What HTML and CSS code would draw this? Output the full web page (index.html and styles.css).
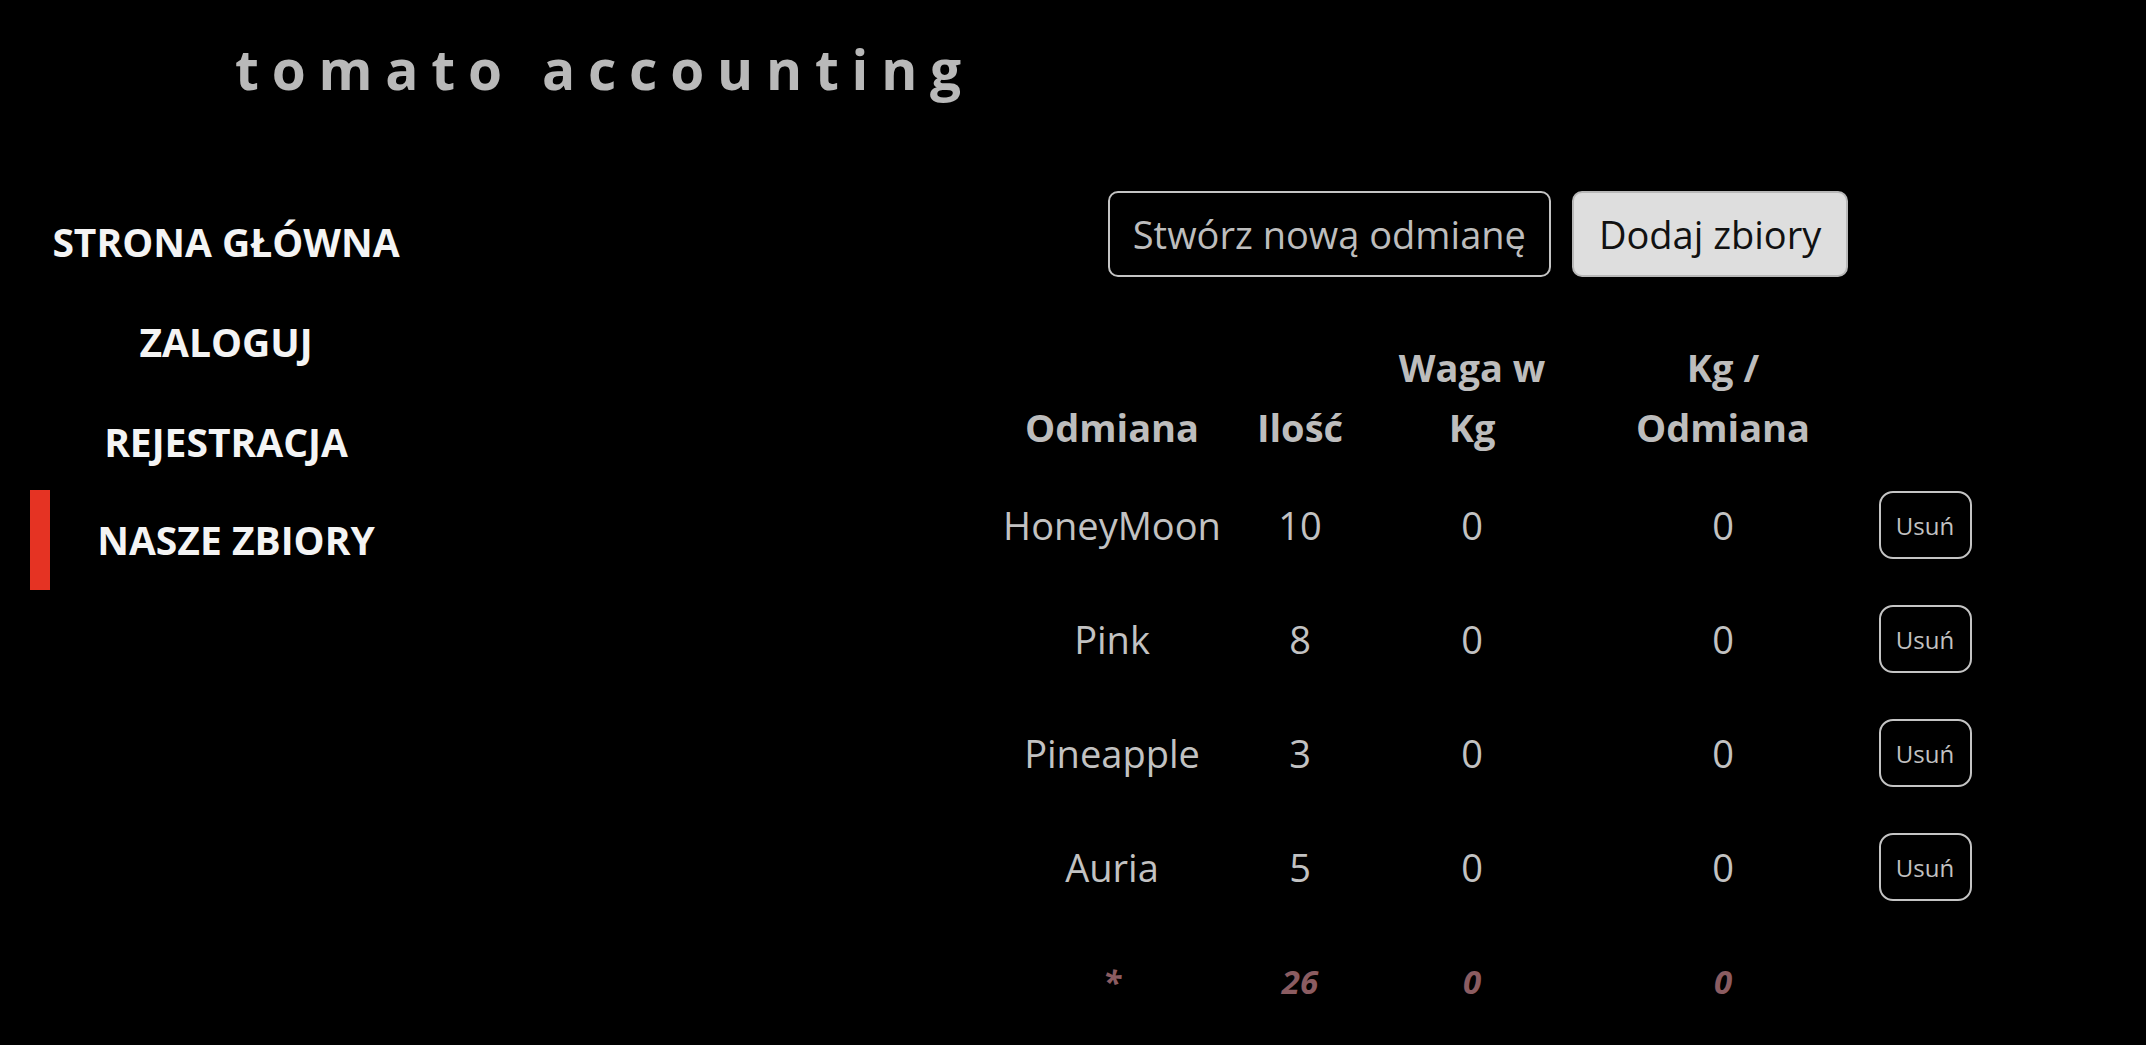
FILE: index.html
```html
<!DOCTYPE html>
<html lang="pl">
<head>
<meta charset="utf-8">
<title>tomato accounting</title>
<link rel="stylesheet" href="styles.css">
</head>
<body>
<header class="top">
  <h1 class="brand">tomato accounting</h1>
</header>
<div class="layout">
  <aside class="side">
    <nav class="nav">
      <a class="nav-item" href="#">Strona główna</a>
      <a class="nav-item" href="#">Zaloguj</a>
      <a class="nav-item" href="#">Rejestracja</a>
      <a class="nav-item active" href="#">Nasze zbiory</a>
    </nav>
  </aside>
  <main class="main">
    <div class="actions">
      <button class="btn btn-outline">Stwórz nową odmianę</button>
      <button class="btn btn-light">Dodaj zbiory</button>
    </div>
    <table class="harvest">
      <colgroup>
        <col class="c1"><col class="c2"><col class="c3"><col class="c4"><col class="c5">
      </colgroup>
      <thead>
        <tr>
          <th>Odmiana</th>
          <th>Ilość</th>
          <th>Waga w<br>Kg</th>
          <th>Kg /<br>Odmiana</th>
          <th></th>
        </tr>
      </thead>
      <tbody>
        <tr><td>HoneyMoon</td><td>10</td><td>0</td><td>0</td><td><button class="btn-del">Usuń</button></td></tr>
        <tr><td>Pink</td><td>8</td><td>0</td><td>0</td><td><button class="btn-del">Usuń</button></td></tr>
        <tr><td>Pineapple</td><td>3</td><td>0</td><td>0</td><td><button class="btn-del">Usuń</button></td></tr>
        <tr><td>Auria</td><td>5</td><td>0</td><td>0</td><td><button class="btn-del">Usuń</button></td></tr>
      </tbody>
      <tfoot>
        <tr><td>*</td><td>26</td><td>0</td><td>0</td><td></td></tr>
      </tfoot>
    </table>
  </main>
</div>
</body>
</html>
```

FILE: styles.css
```css
html, body {
  margin: 0;
  padding: 0;
  background: #000;
}
body {
  font-family: "Open Sans", "Noto Sans", sans-serif;
  color: #c0c0c0;
}
.top {
  padding: 39px 0 0 235px;
  height: 60px;
}
.brand {
  margin: 0;
  font-size: 55px;
  line-height: 60px;
  font-weight: 700;
  letter-spacing: 12.8px;
  color: #b9b9b9;
}
.layout {
  display: flex;
}
.side {
  width: 452px;
  flex: none;
  padding-top: 93px;
  box-sizing: border-box;
}
.nav {
  display: flex;
  flex-direction: column;
  padding-left: 30px;
}
.nav-item {
  width: 392px;
  box-sizing: border-box;
  height: 100px;
  line-height: 100px;
  text-align: center;
  text-transform: uppercase;
  font-weight: 700;
  font-size: 39px;
  color: #f4f4f4;
  text-decoration: none;
}
.nav-item.active {
  border-left: 20px solid #e53323;
}
.side .nav-item.active {
  margin-top: -2px;
}
.main {
  flex: 1;
  padding: 92px 0 0 366px;
  display: flex;
  flex-direction: column;
  align-items: center;
}
.actions {
  display: flex;
  gap: 21px;
  margin-right: 8px;
}
.btn {
  font-family: inherit;
  font-size: 38px;
  height: 86px;
  padding: 0 23px;
  border-radius: 10px;
  cursor: pointer;
}
.btn-outline {
  background: #000;
  color: #bdbdbd;
  border: 2px solid #c4c4c4;
}
.btn-light {
  background: #dedede;
  color: #111;
  border: 2px solid #b8b8b8;
  padding: 0 25px;
}
.harvest {
  margin-top: 60px;
  margin-left: 8px;
  border-collapse: collapse;
  table-layout: fixed;
  width: 972px;
  font-size: 38px;
  line-height: 60px;
}
.c1 { width: 224px; }
.c2 { width: 152px; }
.c3 { width: 192px; }
.c4 { width: 310px; }
.c5 { width: 94px; }
.harvest th {
  padding: 0 0 11px;
  vertical-align: bottom;
  text-align: center;
  font-weight: 700;
  color: #bdbdbd;
}
.harvest td {
  padding: 23px 0;
  text-align: center;
  vertical-align: middle;
  color: #c2c2c2;
  white-space: nowrap;
}
.harvest tfoot td {
  padding: 33px 0 17px;
  font-size: 33px;
  line-height: 50px;
  font-weight: 700;
  font-style: italic;
  color: #8b5c61;
}
.btn-del {
  display: block;
  width: 93px;
  height: 68px;
  margin: 0 auto;
  padding: 0;
  background: #000;
  color: #c2c2c2;
  border: 2px solid #c4c4c4;
  border-radius: 14px;
  font-family: inherit;
  font-size: 24px;
  cursor: pointer;
}
```
